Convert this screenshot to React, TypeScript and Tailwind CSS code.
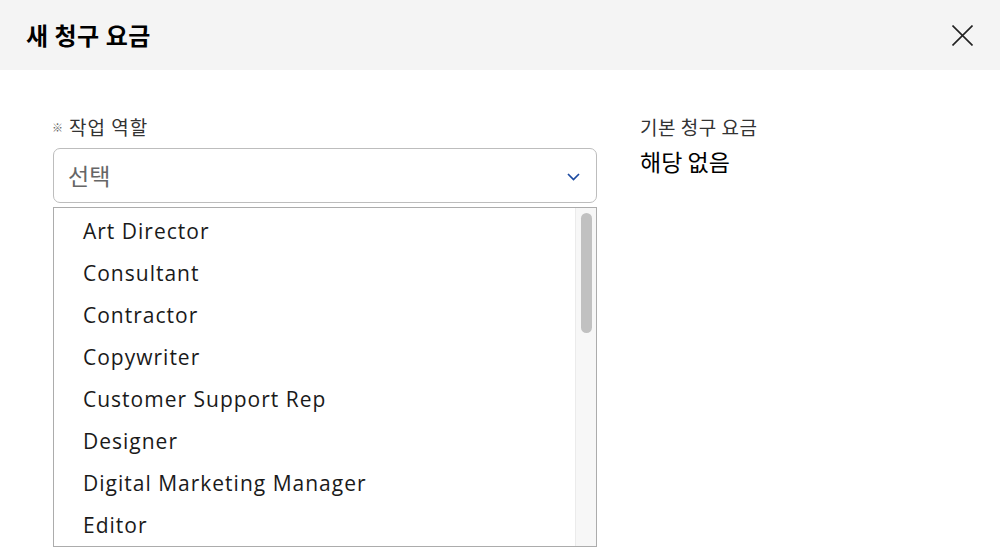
const roles = [
  "Art Director",
  "Consultant",
  "Contractor",
  "Copywriter",
  "Customer Support Rep",
  "Designer",
  "Digital Marketing Manager",
  "Editor",
];

const kr = { fontFamily: "'Noto Sans CJK KR', 'Open Sans', sans-serif" };

export default function App() {
  return (
    <div
      className="w-[1000px] h-[554px] overflow-hidden bg-white text-[#1a1a1a]"
      style={{ fontFamily: "'Open Sans', 'Noto Sans CJK KR', sans-serif" }}
    >
      {/* Header */}
      <div className="h-[70px] bg-[#f4f4f4] flex items-center justify-between pl-[26px] pr-[27px]">
        <h1 className="text-[24px] font-bold text-black tracking-[0.5px] leading-none" style={kr}>
          새 청구 요금
        </h1>
        <button aria-label="닫기" className="text-[#222]">
          <svg width="21" height="21" viewBox="0 0 21 21" fill="none" stroke="currentColor" strokeWidth="1.6">
            <path d="M0.5 0.5 L20.5 20.5 M20.5 0.5 L0.5 20.5" />
          </svg>
        </button>
      </div>

      {/* Body */}
      <div className="flex pt-[46px] pl-[53px]">
        <div className="w-[544px]">
          <label className="flex items-center text-[19px] tracking-[1px] text-[#333] h-[22px] mb-[10px]" style={kr}>
            <span className="text-[11px] text-[#666] mr-[5px] ml-[-1px]">※</span>
            작업 역할
          </label>
          <div className="h-[55px] border border-[#bdbdbd] rounded-[7px] flex items-center justify-between pl-[14px] pr-[16px]">
            <span className="text-[23px] text-[#666]" style={kr}>선택</span>
            <svg width="13" height="8" viewBox="0 0 13 8" fill="none" stroke="#1c4aa0" strokeWidth="1.7" className="mt-[2px]">
              <path d="M1 1 L6.5 6.5 L12 1" />
            </svg>
          </div>
          <div className="mt-[4px] h-[340px] border border-[#acacac] flex overflow-hidden">
            <ul className="flex-1 pt-[3px]">
              {roles.map((r) => (
                <li key={r} className="h-[42px] flex items-center pl-[29px] text-[21px] tracking-[1px] text-[#1a1a1a]">
                  {r}
                </li>
              ))}
            </ul>
            <div className="w-[21px] bg-[#f7f7f7] border-l border-[#ebebeb] pt-[5px] flex justify-center">
              <div className="w-[11px] h-[120px] bg-[#c1c1c1] rounded-full" />
            </div>
          </div>
        </div>

        <div className="ml-[43px]" style={kr}>
          <div className="text-[19px] tracking-[0.5px] text-[#333] h-[22px] flex items-center">기본 청구 요금</div>
          <div className="text-[23px] text-black mt-[8px] leading-[30px]">해당 없음</div>
        </div>
      </div>
    </div>
  );
}
